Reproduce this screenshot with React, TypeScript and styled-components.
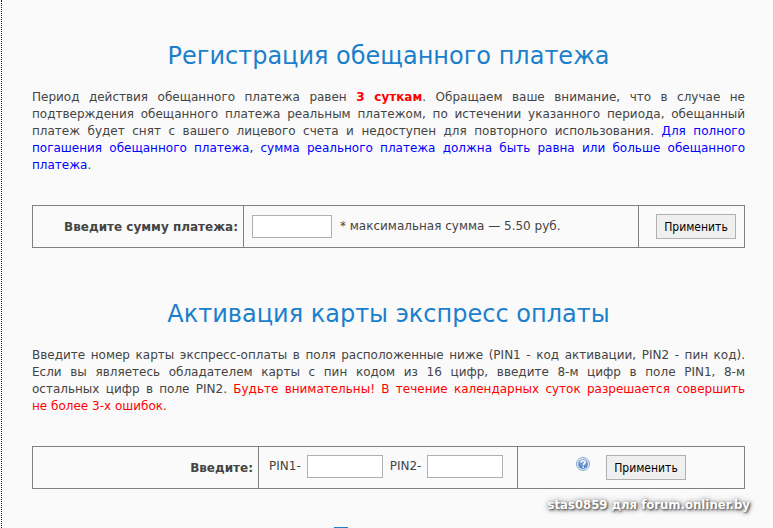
import React from "react";
import styled, { createGlobalStyle } from "styled-components";

const GlobalStyle = createGlobalStyle`
  * { box-sizing: border-box; }
  body {
    margin: 0;
    background: #fafafa;
    color: #444;
    font: 12px/17px Verdana, "DejaVu Sans", sans-serif;
  }
`;

const Page = styled.main`
  height: 100vh;
  margin-left: 1px;
  padding: 0 28px 0 30px;
  border-left: 1px dotted #222;
  overflow: hidden;
`;

const Section = styled.section`
  padding-top: 39px;
  margin-bottom: 10px;
`;

const Title = styled.h1`
  margin: 0 0 16px;
  color: #1a80cc;
  font-size: 24px;
  font-weight: 400;
  line-height: 34px;
  text-align: center;
`;

const Text = styled.p`
  margin: 0 0 31px;
  text-align: justify;
`;

const Warning = styled.strong`
  color: #f00;
`;

const Colored = styled.span<{ $color: string }>`
  color: ${(p) => p.$color};
`;

const FormRow = styled.form<{ $columns: string }>`
  display: grid;
  grid-template-columns: ${(p) => p.$columns};
  height: 43px;
  border: 1px solid #808080;
`;

const Cell = styled.div<{ $align?: string }>`
  display: flex;
  align-items: center;
  justify-content: ${(p) => p.$align ?? "flex-start"};
  padding: 0 8px;
  white-space: nowrap;

  & + & {
    border-left: 1px solid #808080;
  }
`;

const HeadCell = styled(Cell)`
  padding: 2px 5px 0;
  font-weight: 700;
`;

const PinCell = styled(Cell)`
  gap: 7px;
  padding: 0 10px 2px;
`;

const Field = styled.label`
  display: flex;
  align-items: center;
  gap: 6px;
`;

const Input = styled.input<{ $width: number }>`
  width: ${(p) => p.$width}px;
  height: 23px;
  padding: 1px 4px;
  border: 1px solid #b0b0b0;
  border-radius: 0;
  background: #fff;
  font: inherit;
`;

const Hint = styled.span`
  margin-left: 8px;
`;

const Button = styled.button`
  width: 80px;
  height: 25px;
  padding: 0;
  border: 1px solid #b0b0b0;
  border-radius: 0;
  background: #efefef;
  color: #000;
  font: 12px Tahoma, "DejaVu Sans Condensed", "DejaVu Sans", sans-serif;
`;

const HelpButton = styled.button`
  display: flex;
  margin: 0 16px 8px 0;
  padding: 0;
  border: 0;
  background: none;
`;

const NextTitleEdge = styled.div`
  width: 14px;
  height: 1px;
  margin: 38px 0 0 302px;
  background: #1a80cc;
`;

const Watermark = styled.div`
  position: absolute;
  right: 23px;
  bottom: 15px;
  color: #fff;
  font: 700 13px/17px "DejaVu Sans Condensed", "DejaVu Sans", sans-serif;
  text-shadow: 1px 1px 2px #555, 1px 1px 4px #777, 0 0 6px #999;
`;

function HelpIcon() {
  return (
    <svg width="14" height="14" viewBox="0 0 14 14" aria-hidden="true">
      <defs>
        <linearGradient id="help" x1="0" y1="0" x2="0" y2="1">
          <stop offset="0" stopColor="#8fb2e0" />
          <stop offset="1" stopColor="#4a7dbe" />
        </linearGradient>
      </defs>
      <circle cx="7" cy="7" r="6.5" fill="#e4edf8" stroke="#86a8d6" />
      <circle cx="7" cy="7" r="5" fill="url(#help)" />
      <path
        d="M5 5.5C5.1 3.2 9 3.2 9 5.4C9 6.8 7.2 6.7 7.2 8.2"
        fill="none"
        stroke="#fff"
        strokeWidth="1.6"
      />
      <circle cx="7.2" cy="10.1" r="0.9" fill="#fff" />
    </svg>
  );
}

export default function App() {
  return (
    <>
      <GlobalStyle />
      <Page>
        <Section>
          <Title>Регистрация обещанного платежа</Title>
          <Text>
            Период действия обещанного платежа равен <Warning>3 суткам</Warning>. Обращаем ваше
            внимание, что в случае не подтверждения обещанного платежа реальным платежом, по
            истечении указанного периода, обещанный платеж будет снят с вашего лицевого счета и
            недоступен для повторного использования.{" "}
            <Colored $color="#00f">
              Для полного погашения обещанного платежа, сумма реального платежа должна быть равна
              или больше обещанного платежа
            </Colored>
            .
          </Text>
          <FormRow $columns="210px 1fr 106px" onSubmit={(e) => e.preventDefault()}>
            <HeadCell $align="flex-end">
              <label htmlFor="amount">Введите сумму платежа:</label>
            </HeadCell>
            <Cell>
              <Input id="amount" $width={80} />
              <Hint>* максимальная сумма — 5.50 руб.</Hint>
            </Cell>
            <Cell $align="flex-end">
              <Button>Применить</Button>
            </Cell>
          </FormRow>
        </Section>
        <Section>
          <Title>Активация карты экспресс оплаты</Title>
          <Text>
            Введите номер карты экспресс-оплаты в поля расположенные ниже (PIN1 - код активации,
            PIN2 - пин код). Если вы являетесь обладателем карты с пин кодом из 16 цифр, введите 8-м
            цифр в поле PIN1, 8-м остальных{"\u00a0"}цифр в поле PIN2.{" "}
            <Colored $color="#f00">
              Будьте внимательны! В течение календарных суток разрешается совершить
              не{"\u00a0"}более{"\u00a0"}3-х ошибок.
            </Colored>
          </Text>
          <FormRow $columns="225px 259px 1fr" onSubmit={(e) => e.preventDefault()}>
            <HeadCell $align="flex-end">Введите:</HeadCell>
            <PinCell>
              <Field>
                PIN1-
                <Input $width={76} />
              </Field>
              <Field>
                PIN2-
                <Input $width={76} />
              </Field>
            </PinCell>
            <Cell $align="center">
              <HelpButton type="button" aria-label="?">
                <HelpIcon />
              </HelpButton>
              <Button>Применить</Button>
            </Cell>
          </FormRow>
        </Section>
        <NextTitleEdge />
      </Page>
      <Watermark>stas0859 для forum.onliner.by</Watermark>
    </>
  );
}
